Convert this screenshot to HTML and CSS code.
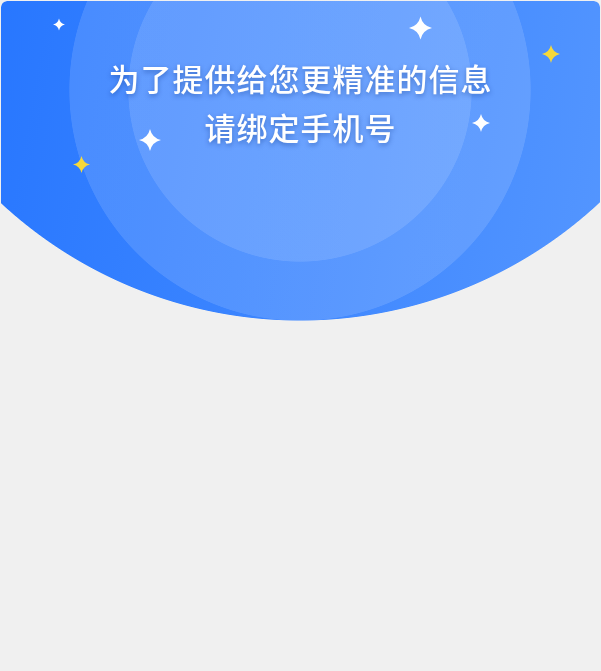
FILE: index.html
```html
<!DOCTYPE html>
<html lang="zh-CN">
<head>
<meta charset="utf-8">
<title>绑定手机号</title>
<link rel="stylesheet" href="styles.css">
</head>
<body>
<div class="page">
  <header class="hero">
    <div class="title">
      <p class="line">为了提供给您更精准的信息</p>
      <p class="line">请绑定手机号</p>
    </div>
    <svg class="star s1" viewBox="0 0 24 24"><path d="M12 0Q14.2 9.8 24 12Q14.2 14.2 12 24Q9.8 14.2 0 12Q9.8 9.8 12 0Z"/></svg>
    <svg class="star s2 gold" viewBox="0 0 24 24"><path d="M12 0Q14.2 9.8 24 12Q14.2 14.2 12 24Q9.8 14.2 0 12Q9.8 9.8 12 0Z"/></svg>
    <svg class="star s3" viewBox="0 0 24 24"><path d="M12 0Q14.2 9.8 24 12Q14.2 14.2 12 24Q9.8 14.2 0 12Q9.8 9.8 12 0Z"/></svg>
    <svg class="star s4" viewBox="0 0 24 24"><path d="M12 0Q14.2 9.8 24 12Q14.2 14.2 12 24Q9.8 14.2 0 12Q9.8 9.8 12 0Z"/></svg>
    <svg class="star s5 gold" viewBox="0 0 24 24"><path d="M12 0Q14.2 9.8 24 12Q14.2 14.2 12 24Q9.8 14.2 0 12Q9.8 9.8 12 0Z"/></svg>
    <svg class="star s6" viewBox="0 0 24 24"><path d="M12 0Q14.2 9.8 24 12Q14.2 14.2 12 24Q9.8 14.2 0 12Q9.8 9.8 12 0Z"/></svg>
  </header>
</div>
</body>
</html>
```

FILE: styles.css
```css
html, body {
  margin: 0;
  padding: 0;
  background: #f0f0f0;
  height: 100%;
}
.page {
  padding: 1px 1px 0 1px;
}
.hero {
  position: relative;
  height: 320px;
  border-radius: 6px 6px 0 0;
  background:
    radial-gradient(circle 172px at 299px 89px, rgba(255,255,255,0.12) 99.6%, rgba(255,255,255,0) 100%),
    radial-gradient(circle 231px at 299px 89px, rgba(255,255,255,0.13) 99.7%, rgba(255,255,255,0) 100%),
    linear-gradient(100deg, #2877ff 0%, #3d86ff 50%, #5496ff 100%);
  -webkit-mask-image: radial-gradient(circle 440px at 299px -120px, #000 99.8%, transparent 100%);
  mask-image: radial-gradient(circle 440px at 299px -120px, #000 99.8%, transparent 100%);
}
.title {
  display: flex;
  flex-direction: column;
  align-items: center;
  padding-top: 52px;
}
.line {
  margin: 0;
  font-family: "Noto Sans CJK SC", "Noto Sans", sans-serif;
  font-weight: 500;
  font-size: 31px;
  line-height: 49px;
  letter-spacing: 1px;
  color: #ffffff;
  text-shadow: 0 2px 5px rgba(0, 40, 120, 0.4);
}
.star {
  position: absolute;
  fill: #ffffff;
}
.star.gold { fill: #f7d93a; }
.s1 { left: 52px; top: 17px; width: 12px; height: 13px; }
.s2 { left: 72px; top: 154px; width: 17px; height: 19px; }
.s3 { left: 138px; top: 127px; width: 22px; height: 24px; }
.s4 { left: 408px; top: 14px; width: 23px; height: 26px; }
.s5 { left: 541px; top: 43px; width: 18px; height: 20px; }
.s6 { left: 471px; top: 112px; width: 18px; height: 20px; }
```
